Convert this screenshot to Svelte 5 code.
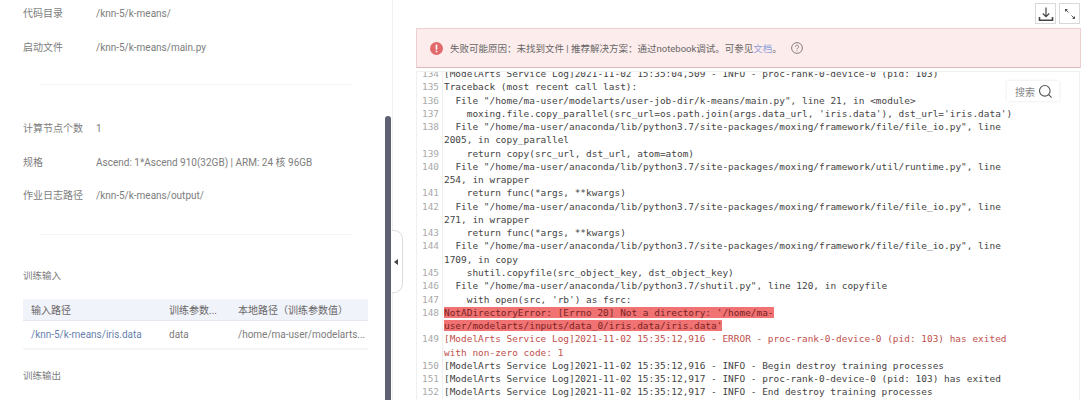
<script>
    const logLines = [
        { n: 134, t: "[ModelArts Service Log]2021-11-02 15:35:04,509 - INFO - proc-rank-0-device-0 (pid: 103)" },
        { n: 135, t: "Traceback (most recent call last):" },
        { n: 136, t: '  File "/home/ma-user/modelarts/user-job-dir/k-means/main.py", line 21, in <module>' },
        { n: 137, t: "    moxing.file.copy_parallel(src_url=os.path.join(args.data_url, 'iris.data'), dst_url='iris.data')" },
        { n: 138, t: '  File "/home/ma-user/anaconda/lib/python3.7/site-packages/moxing/framework/file/file_io.py", line 2005, in copy_parallel' },
        { n: 139, t: "    return copy(src_url, dst_url, atom=atom)" },
        { n: 140, t: '  File "/home/ma-user/anaconda/lib/python3.7/site-packages/moxing/framework/util/runtime.py", line 254, in wrapper' },
        { n: 141, t: "    return func(*args, **kwargs)" },
        { n: 142, t: '  File "/home/ma-user/anaconda/lib/python3.7/site-packages/moxing/framework/file/file_io.py", line 271, in wrapper' },
        { n: 143, t: "    return func(*args, **kwargs)" },
        { n: 144, t: '  File "/home/ma-user/anaconda/lib/python3.7/site-packages/moxing/framework/file/file_io.py", line 1709, in copy' },
        { n: 145, t: "    shutil.copyfile(src_object_key, dst_object_key)" },
        { n: 146, t: '  File "/home/ma-user/anaconda/lib/python3.7/shutil.py", line 120, in copyfile' },
        { n: 147, t: "    with open(src, 'rb') as fsrc:" },
        { n: 148, t: "NotADirectoryError: [Errno 20] Not a directory: '/home/ma-user/modelarts/inputs/data_0/iris.data/iris.data'", hl: true },
        { n: 149, t: "[ModelArts Service Log]2021-11-02 15:35:12,916 - ERROR - proc-rank-0-device-0 (pid: 103) has exited with non-zero code: 1", err: true },
        { n: 150, t: "[ModelArts Service Log]2021-11-02 15:35:12,916 - INFO - Begin destroy training processes" },
        { n: 151, t: "[ModelArts Service Log]2021-11-02 15:35:12,917 - INFO - proc-rank-0-device-0 (pid: 103) has exited" },
        { n: 152, t: "[ModelArts Service Log]2021-11-02 15:35:12,917 - INFO - End destroy training processes" },
    ];
</script>

<div class="page">
    <aside class="side">
        <dl class="group first">
            <div class="row"><dt>代码目录</dt><dd>/knn-5/k-means/</dd></div>
            <div class="row"><dt>启动文件</dt><dd>/knn-5/k-means/main.py</dd></div>
        </dl>
        <hr class="first-rule" />
        <dl class="group">
            <div class="row"><dt>计算节点个数</dt><dd>1</dd></div>
            <div class="row"><dt>规格</dt><dd>Ascend: 1*Ascend 910(32GB) | ARM: 24 核 96GB</dd></div>
            <div class="row"><dt>作业日志路径</dt><dd>/knn-5/k-means/output/</dd></div>
        </dl>
        <hr />
        <h4>训练输入</h4>
        <div class="table">
            <div class="cells head">
                <span>输入路径</span>
                <span>训练参数...</span>
                <span>本地路径（训练参数值）</span>
            </div>
            <div class="cells body">
                <span class="link">/knn-5/k-means/iris.data</span>
                <span>data</span>
                <span>/home/ma-user/modelarts...</span>
            </div>
        </div>
        <h4 class="output-title">训练输出</h4>
        <div class="next-table"></div>
        <div class="scrollbar"></div>
    </aside>

    <div class="handle">
        <svg width="4" height="6" viewBox="0 0 4 6"><path d="M4 0v6L0 3z" fill="#444" /></svg>
    </div>

    <main class="main">
        <div class="tools">
            <button aria-label="下载">
                <svg width="16" height="16" viewBox="0 0 16 16" fill="none" stroke="#444" stroke-width="1.2">
                    <path d="M8 1.5v9M4.8 7.5 8 10.7l3.2-3.2" />
                    <path d="M1.5 11v3.2h13V11" stroke-width="1.6" />
                </svg>
            </button>
            <button aria-label="全屏">
                <svg width="14" height="14" viewBox="0 0 14 14" fill="none" stroke="#555" stroke-width="1">
                    <path d="M2.5 2.5 5.5 5.5M11.5 11.5 8.5 8.5" />
                    <path d="M2 2h3L2 5zM12 12H9l3-3z" fill="#555" stroke="none" />
                </svg>
            </button>
        </div>

        <div class="alert">
            <svg width="13" height="13" viewBox="0 0 13 13">
                <circle cx="6.5" cy="6.5" r="6.5" fill="#e26a6a" />
                <rect x="5.7" y="2.6" width="1.6" height="5" fill="#fff" />
                <rect x="5.7" y="8.7" width="1.6" height="1.6" fill="#fff" />
            </svg>
            <span class="msg">失败可能原因：未找到文件 | 推荐解决方案：通过notebook调试。可参见<span class="doc">文档</span>。</span>
            <svg class="help" width="12" height="12" viewBox="0 0 12 12" fill="none" stroke="#666" stroke-width="0.8">
                <circle cx="6" cy="6" r="5.4" />
                <path d="M4.4 4.7a1.6 1.6 0 1 1 2.4 1.4c-.5.3-.8.6-.8 1.2" />
                <path d="M6 8.4v.9" />
            </svg>
        </div>

        <div class="log">
            <div class="log-inner">
                {#each logLines as line}
                    <div class="line">
                        <span class="num">{line.n}</span>
                        <span class="text" class:err={line.err}><span class:hl={line.hl}>{line.t}</span></span>
                    </div>
                {/each}
            </div>
            <div class="search">
                <span>搜索</span>
                <svg width="15" height="15" viewBox="0 0 15 15" fill="none" stroke="#555" stroke-width="1.1">
                    <circle cx="6.8" cy="6.8" r="5.3" />
                    <path d="m10.6 10.6 3 3" />
                </svg>
            </div>
        </div>
    </main>
</div>

<style>
    :global(body) {
        background: #fff;
    }

    .page {
        display: flex;
        height: 400px;
        overflow: hidden;
        position: relative;
        font-family: Roboto, "Noto Sans CJK SC", sans-serif;
        font-size: 10px;
        color: #7d7d7d;
    }

    .side {
        box-sizing: border-box;
        flex: 0 0 392px;
        padding: 0 24px 0 23px;
        position: relative;
    }

    .group {
        margin: 0;
    }

    .group.first {
        padding-top: 4px;
    }

    .row {
        display: flex;
        height: 33.5px;
    }

    .row dt {
        flex: 0 0 73px;
        line-height: 20px;
    }

    .row dd {
        margin: 0;
        line-height: 20px;
    }

    hr {
        border: 0;
        border-top: 1px solid #f3f3f3;
        margin: 14px 16px 34px 17px;
    }

    hr.first-rule {
        margin-top: 13px;
    }

    h4 {
        font-size: 9.5px;
        font-weight: 400;
        margin: 0;
        line-height: 14px;
    }

    .table {
        margin-top: 16px;
        width: 345px;
        border-bottom: 2px solid #f5f5f7;
    }

    .cells {
        display: grid;
        grid-template-columns: 138px 69px 1fr;
        align-items: center;
    }

    .cells span {
        padding-left: 8px;
        white-space: nowrap;
        overflow: hidden;
    }

    .head {
        height: 21px;
        background: #f1f3fa;
        border-bottom: 1px solid #e6e8f0;
        color: #666;
    }

    .body {
        height: 27px;
    }

    .link {
        color: #6a7fae;
    }

    .output-title {
        margin-top: 19px;
    }

    .next-table {
        margin-top: 17px;
        width: 345px;
        height: 12px;
        background: #f5f6fb;
    }

    .scrollbar {
        position: absolute;
        left: 385px;
        top: 116px;
        bottom: 0;
        width: 6px;
        border-radius: 3px 3px 0 0;
        background: #5f6072;
    }

    .handle {
        position: absolute;
        left: 392px;
        top: 230px;
        box-sizing: border-box;
        width: 11px;
        height: 63px;
        border: 1px solid #dcdcdc;
        border-left: 0;
        border-radius: 0 9px 9px 0;
        background: #fff;
        display: flex;
        align-items: center;
        padding-left: 2px;
    }

    .main {
        flex: 1;
        box-sizing: border-box;
        padding: 3px 3px 0 23px;
        min-width: 0;
        border-left: 1px solid #f0f0f0;
    }

    .tools {
        display: flex;
        justify-content: flex-end;
        gap: 3px;
        padding-right: 1px;
    }

    .tools button {
        box-sizing: border-box;
        width: 21px;
        height: 21px;
        padding: 0;
        display: flex;
        align-items: center;
        justify-content: center;
        background: #fff;
        border: 1px solid #d8d8d8;
    }

    .alert {
        box-sizing: border-box;
        height: 40px;
        margin-top: 4px;
        padding-left: 13px;
        display: flex;
        align-items: center;
        gap: 7px;
        background: #fdecec;
        border: 1px solid #eccfcf;
        border-bottom-color: #dcb8b8;
        color: #666;
    }

    .msg {
        font-size: 9.5px;
    }

    .doc {
        color: #8fa0d8;
    }

    .help {
        margin-left: 2px;
    }

    .log {
        box-sizing: border-box;
        height: 329px;
        margin-top: 3px;
        margin-right: 1px;
        overflow: hidden;
        position: relative;
        border: 1px solid #efefef;
        border-bottom: 0;
    }

    .log-inner {
        margin-top: -5px;
        font-family: "DejaVu Sans Mono", monospace;
        font-size: 9.45px;
        line-height: 13.26px;
        color: #444;
    }

    .line {
        display: flex;
    }

    .num {
        flex: 0 0 22px;
        text-align: right;
        padding-right: 3px;
        margin-right: 1px;
        color: #aaa;
        border-right: 1px solid #efefef;
    }

    .text {
        width: 574px;
        white-space: pre-wrap;
    }

    .err {
        color: #c0504d;
    }

    .hl {
        background: #f07272;
        color: #7a2424;
    }

    .search {
        position: absolute;
        top: 9px;
        right: 20px;
        display: flex;
        align-items: center;
        gap: 3px;
        box-sizing: border-box;
        height: 20px;
        padding: 0 6px 0 8px;
        background: #fff;
        box-shadow: 0 0 3px #e4e4e4;
        color: #888;
    }
</style>
